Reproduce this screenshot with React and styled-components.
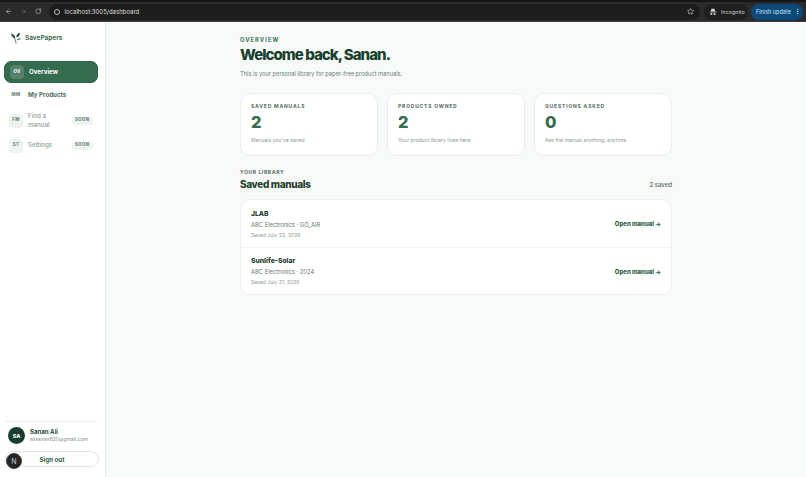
import React from "react";
import styled, { createGlobalStyle } from "styled-components";
import { ArrowLeft, ArrowRight, RotateCw, Star, MoreVertical } from "lucide-react";

const Global = createGlobalStyle`
  html, body { margin: 0; padding: 0; height: 100%; overflow: hidden; background: #f7faf8; }
  #root { height: 100%; }
  * { box-sizing: border-box; }
  body { font-family: Inter, "Noto Sans", sans-serif; }
`;

const Page = styled.div`
  height: 477px;
  width: 806px;
  display: flex;
  flex-direction: column;
  position: relative;
`;

const BrowserBar = styled.header`
  height: 22px;
  flex: none;
  background: #2b2b2b;
  border-top: 2px solid #161616;
  border-bottom: 1px solid #3c3c3c;
  display: flex;
  align-items: center;
  padding: 0 3px 0 5px;
  color: #c4c4c4;
`;

const NavIcons = styled.div`
  display: flex;
  align-items: center;
  gap: 8px;
  margin-right: 7px;
`;

const NavBtn = styled.span`
  display: flex;
  color: ${(p) => (p.$off ? "#6c6c6c" : "#c8c8c8")};
`;

const Omnibox = styled.div`
  flex: 1;
  height: 16px;
  border-radius: 8px;
  background: #1d1d1d;
  display: flex;
  align-items: center;
  padding: 0 6px 0 5px;
  font-size: 6px;
  color: #dedede;
  min-width: 0;
`;

const SiteDot = styled.span`
  width: 6px;
  height: 6px;
  border-radius: 50%;
  border: 1px solid #bdbdbd;
  margin-right: 5px;
  flex: none;
`;

const UrlText = styled.span`
  flex: 1;
`;

const IncognitoChip = styled.div`
  width: 44px;
  height: 16px;
  margin-left: 4px;
  padding-left: 5px;
  border-radius: 8px;
  background: #1f1f1f;
  display: flex;
  align-items: center;
  gap: 4px;
  font-size: 5.4px;
  color: #cfcfcf;
`;

const UpdateChip = styled.div`
  width: 52px;
  height: 16px;
  margin-left: 3px;
  padding-left: 5px;
  border-radius: 8px;
  background: #0b4a78;
  display: flex;
  align-items: center;
  justify-content: space-between;
  padding-right: 2px;
  font-size: 5.5px;
  color: #cde4f6;
`;

const Body = styled.div`
  flex: 1;
  display: flex;
  min-height: 0;
`;

const Sidebar = styled.aside`
  width: 106px;
  flex: none;
  background: #fff;
  border-right: 1px solid #e9efeb;
  padding: 9px 7px 10px 4px;
  display: flex;
  flex-direction: column;
`;

const Brand = styled.div`
  display: flex;
  align-items: center;
  gap: 3px;
  padding-left: 6px;
  height: 13px;
  margin-bottom: 17px;
  font-size: 6.5px;
  font-weight: 600;
  color: #2f5d46;
`;

const NavList = styled.nav`
  display: flex;
  flex-direction: column;
  gap: 1.5px;
`;

const NavItem = styled.div`
  display: flex;
  align-items: center;
  gap: 5px;
  min-height: ${(p) => p.$h || 22}px;
  padding: 0 5px;
  border-radius: 7px;
  background: ${(p) => (p.$active ? "#356b4f" : "transparent")};
  border: ${(p) => (p.$active ? "1px solid #2f6047" : "none")};
  color: ${(p) => (p.$active ? "#fff" : p.$dim ? "#8d9f95" : "#4f6a5c")};
  font-size: 6.2px;
  font-weight: ${(p) => (p.$dim ? 500 : 700)};
  line-height: 8.5px;
`;

const NavBadge = styled.span`
  width: 14px;
  height: 14px;
  flex: none;
  border-radius: 4px;
  display: flex;
  align-items: center;
  justify-content: center;
  font-size: 4.5px;
  font-weight: 700;
  letter-spacing: 0.3px;
  background: ${(p) => (p.$active ? "rgba(255,255,255,0.16)" : p.$plain ? "transparent" : "#edf4ef")};
  color: ${(p) => (p.$active ? "#fff" : "#5f7a6b")};
`;

const NavLabel = styled.span`
  flex: 1;
`;

const Soon = styled.span`
  flex: none;
  height: 8px;
  padding: 0 3.5px;
  border-radius: 4px;
  background: #edf4ef;
  color: #6b8577;
  font-size: 4.2px;
  font-weight: 800;
  letter-spacing: 0.5px;
  display: flex;
  align-items: center;
`;

const SideFoot = styled.div`
  margin-top: auto;
  border-top: 1px solid #eef2ef;
  padding-top: 5px;
`;

const UserRow = styled.div`
  display: flex;
  align-items: center;
  gap: 5px;
  padding-left: 4px;
  margin-bottom: 7px;
`;

const Avatar = styled.div`
  width: 17px;
  height: 17px;
  border-radius: 50%;
  background: #173f2e;
  color: #fff;
  font-size: 5.4px;
  font-weight: 800;
  display: flex;
  align-items: center;
  justify-content: center;
  flex: none;
`;

const UserName = styled.div`
  font-size: 6.1px;
  font-weight: 700;
  color: #2a4a3a;
  line-height: 8px;
`;

const UserMail = styled.div`
  font-size: 5px;
  color: #7d8f85;
  line-height: 7px;
`;

const SignOut = styled.button`
  display: block;
  width: 94px;
  height: 16px;
  margin-left: 1px;
  padding: 0;
  background: #fff;
  border: 1px solid #dfe7e2;
  border-radius: 8px;
  font-family: inherit;
  font-size: 6.2px;
  font-weight: 700;
  color: #2f5d46;
`;

const DevBadge = styled.div`
  position: absolute;
  left: 6px;
  top: 453px;
  width: 16px;
  height: 16px;
  border-radius: 50%;
  background: #242424;
  border: 1px solid #3e3e3e;
  color: #ccc;
  font-size: 7px;
  font-weight: 400;
  display: flex;
  align-items: center;
  justify-content: center;
`;

const Main = styled.main`
  flex: 1;
  background: #f7faf8;
  display: flex;
  justify-content: center;
  padding-top: 15px;
`;

const Content = styled.div`
  width: 432px;
`;

const Eyebrow = styled.div`
  font-size: 5.6px;
  font-weight: 800;
  letter-spacing: 1.1px;
  color: #4d7f64;
  line-height: 7px;
  margin-bottom: 1px;
`;

const Title = styled.h1`
  margin: 0 0 5px;
  font-size: 15px;
  line-height: 20px;
  font-weight: 800;
  letter-spacing: -0.95px;
  color: #173f2e;
`;

const Lead = styled.p`
  margin: 0 0 15px;
  font-size: 5.7px;
  line-height: 8px;
  color: #6c8076;
`;

const Stats = styled.div`
  display: grid;
  grid-template-columns: repeat(3, 1fr);
  gap: 9px;
  margin-bottom: 13px;
`;

const Card = styled.section`
  height: 63px;
  background: #fff;
  border: 1px solid #e9efeb;
  border-radius: 10px;
  padding: 9px 10px 0;
`;

const CardLabel = styled.div`
  font-size: 4.9px;
  font-weight: 800;
  letter-spacing: 0.85px;
  color: #66796f;
  line-height: 7px;
  margin-bottom: 3px;
`;

const CardValue = styled.div`
  font-size: 16.5px;
  line-height: 19px;
  font-weight: 800;
  color: #356b4f;
  margin-bottom: 5px;
`;

const CardNote = styled.div`
  font-size: 5.1px;
  line-height: 7px;
  color: #8b9b92;
`;

const LibHead = styled.div`
  display: flex;
  align-items: flex-end;
  justify-content: space-between;
  margin-bottom: 8px;
`;

const LibEyebrow = styled.div`
  font-size: 5px;
  font-weight: 800;
  letter-spacing: 0.6px;
  color: #66796f;
  line-height: 7px;
  margin-bottom: 2px;
`;

const LibTitle = styled.h2`
  margin: 0;
  font-size: 10px;
  line-height: 13px;
  font-weight: 800;
  letter-spacing: -0.35px;
  color: #1f3f2f;
`;

const Count = styled.div`
  font-size: 6px;
  font-weight: 600;
  color: #66796f;
  line-height: 8px;
  margin-bottom: 2px;
`;

const List = styled.div`
  background: #fff;
  border: 1px solid #e9efeb;
  border-radius: 10px;
`;

const Row = styled.div`
  height: 47px;
  display: flex;
  align-items: center;
  justify-content: space-between;
  padding: 0 10px;
  & + & {
    border-top: 1px solid #f1f4f2;
  }
`;

const RowName = styled.div`
  font-size: 6.8px;
  font-weight: 800;
  line-height: 9px;
  color: #1f3f2f;
  margin-bottom: 3px;
`;

const RowMeta = styled.div`
  font-size: 5.8px;
  line-height: 8px;
  color: #66796f;
  margin-bottom: 3px;
`;

const RowDate = styled.div`
  font-size: 5.1px;
  line-height: 7px;
  color: #8b9b92;
`;

const OpenLink = styled.a`
  font-size: 6px;
  font-weight: 800;
  color: #2f5d46;
`;

const Leaf = () => (
  <svg width="12" height="12" viewBox="0 0 12 12" fill="none">
    <path d="M6 11.5C6 8.5 5 6.5 2.5 4.5" stroke="#2f5d46" strokeWidth="0.8" />
    <path d="M1 1.5C3.5 2 5.2 3.5 5.4 6.2 3 6 1.4 4.4 1 1.5Z" fill="#2f6047" />
    <path d="M9.5 0.5C10.2 2.8 9 4.6 6.5 5.6 6.2 3.4 7.3 1.6 9.5 0.5Z" fill="#173f2e" />
    <path d="M11 6.6C10 8.2 8.4 8.6 6.6 8 7.4 6.6 9 6 11 6.6Z" fill="#5b9274" />
  </svg>
);

const Spy = () => (
  <svg width="8" height="8" viewBox="0 0 8 8" fill="#cfcfcf">
    <path d="M2.4 0.8h3.2L6.2 3.4H1.8Z" />
    <rect x="0.6" y="3.6" width="6.8" height="0.7" />
    <circle cx="2.4" cy="6" r="1.1" />
    <circle cx="5.6" cy="6" r="1.1" />
  </svg>
);

const nav = [
  { code: "OV", label: "Overview", active: true },
  { code: "MM", label: "My Products", plain: true },
  { code: "FM", label: <>Find a<br />manual</>, soon: true, h: 25 },
  { code: "ST", label: "Settings", soon: true },
];

const stats = [
  ["SAVED MANUALS", "2", "Manuals you've saved"],
  ["PRODUCTS OWNED", "2", "Your product library lives here"],
  ["QUESTIONS ASKED", "0", "Ask the manual anything, anytime"],
];

const manuals = [
  ["JLAB", "ABC Electronics · GO_AIR", "Saved July 22, 2026"],
  ["Sunlife-Solar", "ABC Electronics · 2024", "Saved July 21, 2026"],
];

export default function App() {
  return (
    <Page>
      <Global />
      <BrowserBar>
        <NavIcons>
          <NavBtn><ArrowLeft size={7} /></NavBtn>
          <NavBtn $off><ArrowRight size={7} /></NavBtn>
          <NavBtn><RotateCw size={6.5} /></NavBtn>
        </NavIcons>
        <Omnibox>
          <SiteDot />
          <UrlText>localhost:3005/dashboard</UrlText>
          <Star size={7} />
        </Omnibox>
        <IncognitoChip><Spy />Incognito</IncognitoChip>
        <UpdateChip>Finish update<MoreVertical size={7} /></UpdateChip>
      </BrowserBar>
      <Body>
        <Sidebar>
          <Brand><Leaf />SavePapers</Brand>
          <NavList>
            {nav.map((n) => (
              <NavItem key={n.code} $active={n.active} $dim={n.soon} $h={n.h}>
                <NavBadge $active={n.active} $plain={n.plain}>{n.code}</NavBadge>
                <NavLabel>{n.label}</NavLabel>
                {n.soon && <Soon>SOON</Soon>}
              </NavItem>
            ))}
          </NavList>
          <SideFoot>
            <UserRow>
              <Avatar>SA</Avatar>
              <div>
                <UserName>Sanan Ali</UserName>
                <UserMail>alisanan620@gmail.com</UserMail>
              </div>
            </UserRow>
            <SignOut>Sign out</SignOut>
          </SideFoot>
        </Sidebar>
        <Main>
          <Content>
            <Eyebrow>OVERVIEW</Eyebrow>
            <Title>Welcome back, Sanan.</Title>
            <Lead>This is your personal library for paper-free product manuals.</Lead>
            <Stats>
              {stats.map(([l, v, n]) => (
                <Card key={l}>
                  <CardLabel>{l}</CardLabel>
                  <CardValue>{v}</CardValue>
                  <CardNote>{n}</CardNote>
                </Card>
              ))}
            </Stats>
            <LibHead>
              <div>
                <LibEyebrow>YOUR LIBRARY</LibEyebrow>
                <LibTitle>Saved manuals</LibTitle>
              </div>
              <Count>2 saved</Count>
            </LibHead>
            <List>
              {manuals.map(([a, b, c]) => (
                <Row key={a}>
                  <div>
                    <RowName>{a}</RowName>
                    <RowMeta>{b}</RowMeta>
                    <RowDate>{c}</RowDate>
                  </div>
                  <OpenLink>Open manual →</OpenLink>
                </Row>
              ))}
            </List>
          </Content>
        </Main>
      </Body>
      <DevBadge>N</DevBadge>
    </Page>
  );
}
